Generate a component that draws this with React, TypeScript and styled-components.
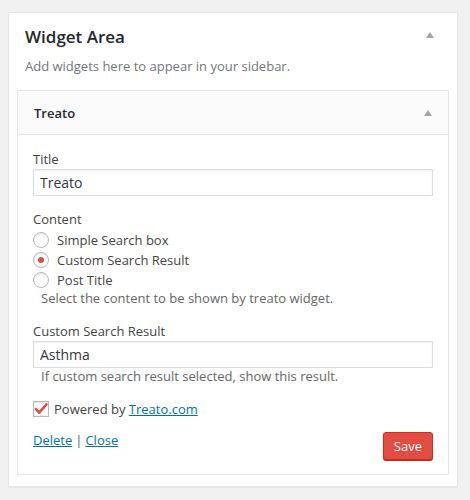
import React from "react";
import styled, { createGlobalStyle } from "styled-components";

const Global = createGlobalStyle`
  html, body { margin: 0; padding: 0; background: #f1f1f1; }
  body { font-family: "Open Sans", "Noto Sans", sans-serif; font-size: 13px; color: #444; }
  * { box-sizing: border-box; }
`;

const Page = styled.div`
  padding: 12px 12px 12px 8px;
`;

const Panel = styled.section`
  width: 450px;
  background: #fff;
  border: 1px solid #e5e5e5;
  box-shadow: 0 1px 1px rgba(0, 0, 0, 0.04);
  padding: 10px 8px 11px 8px;
`;

const PanelHead = styled.div`
  display: flex;
  align-items: center;
  justify-content: space-between;
  padding: 0 15px 0 8px;
  height: 28px;
`;

const PanelTitle = styled.h2`
  margin: 0;
  font-size: 17px;
  font-weight: 600;
  line-height: 28px;
  color: #23282d;
`;

const Arrow = styled.span<{ $dy?: number }>`
  width: 0;
  height: 0;
  border-left: 4px solid transparent;
  border-right: 4px solid transparent;
  border-bottom: 6px solid #a0a5aa;
  margin-top: ${(p) => p.$dy ?? 0}px;
`;

const Description = styled.p`
  margin: 5px 0 14px 8px;
  line-height: 20px;
  color: #72777c;
`;

const Widget = styled.div`
  border: 1px solid #e5e5e5;
  background: #fff;
`;

const WidgetTop = styled.div`
  display: flex;
  align-items: center;
  justify-content: space-between;
  height: 44px;
  padding: 0 16px;
  background: #fafafa;
  border-bottom: 1px solid #e5e5e5;
`;

const WidgetTitle = styled.h3`
  margin: 0;
  font-size: 13px;
  font-weight: 600;
  color: #23282d;
`;

const Body = styled.div`
  padding: 15px 15px 14px 15px;
`;

const Field = styled.div<{ $gap?: number }>`
  display: flex;
  flex-direction: column;
  margin-top: ${(p) => p.$gap ?? 0}px;
`;

const Label = styled.label`
  line-height: 18px;
  color: #444;
`;

const TextInput = styled.input`
  margin-top: 1px;
  width: 100%;
  height: 27px;
  padding: 0 6px;
  font-family: inherit;
  font-size: 14px;
  color: #32373c;
  background: #fff;
  border: 1px solid #ddd;
  box-shadow: inset 0 1px 2px rgba(0, 0, 0, 0.07);
  outline: none;
`;

const RadioList = styled.div`
  display: flex;
  flex-direction: column;
  margin-top: 2px;
`;

const OptionRow = styled.label`
  display: flex;
  align-items: center;
  height: 20px;
  gap: 8px;
  color: #444;
`;

const Radio = styled.span<{ $checked?: boolean }>`
  width: 16px;
  height: 16px;
  border-radius: 50%;
  border: 1px solid #b4b9be;
  background: #fff;
  box-shadow: inset 0 1px 2px rgba(0, 0, 0, 0.1);
  display: flex;
  align-items: center;
  justify-content: center;
  &::after {
    content: "";
    display: ${(p) => (p.$checked ? "block" : "none")};
    width: 6px;
    height: 6px;
    border-radius: 50%;
    background: #e14d43;
  }
`;

const Help = styled.p`
  margin: 0;
  padding-left: 8px;
  line-height: 16px;
  color: #666;
`;

const CheckRow = styled.label`
  display: flex;
  align-items: center;
  gap: 5px;
  height: 20px;
  margin-top: 15px;
  color: #444;
`;

const CheckBox = styled.span`
  width: 16px;
  height: 16px;
  border: 1px solid #b4b9be;
  background: #fff;
  box-shadow: inset 0 1px 2px rgba(0, 0, 0, 0.1);
  display: flex;
  align-items: center;
  justify-content: center;
`;

const Link = styled.a`
  color: #0073aa;
  text-decoration: underline;
`;

const Footer = styled.div`
  display: flex;
  justify-content: space-between;
  align-items: flex-start;
  margin-top: 12px;
`;

const Actions = styled.div`
  line-height: 18px;
  color: #444;
`;

const Sep = styled.span`
  margin: 0 3px;
  color: #555;
`;

const SaveButton = styled.button`
  margin-top: 1px;
  height: 28px;
  padding: 0 10px;
  font-family: inherit;
  font-size: 13px;
  color: #fff;
  background: #e14d43;
  border: 1px solid #d02c21;
  border-radius: 3px;
  box-shadow: 0 1px 0 #ba281e;
  cursor: pointer;
`;

export default function App() {
  return (
    <>
      <Global />
      <Page>
        <Panel>
          <PanelHead>
            <PanelTitle>Widget Area</PanelTitle>
            <Arrow $dy={-5} />
          </PanelHead>
          <Description>Add widgets here to appear in your sidebar.</Description>
          <Widget>
            <WidgetTop>
              <WidgetTitle>Treato</WidgetTitle>
              <Arrow />
            </WidgetTop>
            <Body>
              <Field>
                <Label>Title</Label>
                <TextInput defaultValue="Treato" />
              </Field>
              <Field $gap={14}>
                <Label>Content</Label>
                <RadioList>
                  <OptionRow>
                    <Radio />
                    Simple Search box
                  </OptionRow>
                  <OptionRow>
                    <Radio $checked />
                    Custom Search Result
                  </OptionRow>
                  <OptionRow>
                    <Radio />
                    Post Title
                  </OptionRow>
                </RadioList>
                <Help>Select the content to be shown by treato widget.</Help>
              </Field>
              <Field $gap={16}>
                <Label>Custom Search Result</Label>
                <TextInput defaultValue="Asthma" />
                <Help>If custom search result selected, show this result.</Help>
              </Field>
              <CheckRow>
                <CheckBox>
                  <svg width="14" height="14" viewBox="0 0 14 14">
                    <path d="M2 7.2 L5.2 10.6 L12.4 2.4" fill="none" stroke="#e14d43" strokeWidth="2.6" strokeLinecap="round" strokeLinejoin="round" />
                  </svg>
                </CheckBox>
                <span>
                  Powered by <Link href="#">Treato.com</Link>
                </span>
              </CheckRow>
              <Footer>
                <Actions>
                  <Link href="#">Delete</Link>
                  <Sep>|</Sep>
                  <Link href="#">Close</Link>
                </Actions>
                <SaveButton>Save</SaveButton>
              </Footer>
            </Body>
          </Widget>
        </Panel>
      </Page>
    </>
  );
}
